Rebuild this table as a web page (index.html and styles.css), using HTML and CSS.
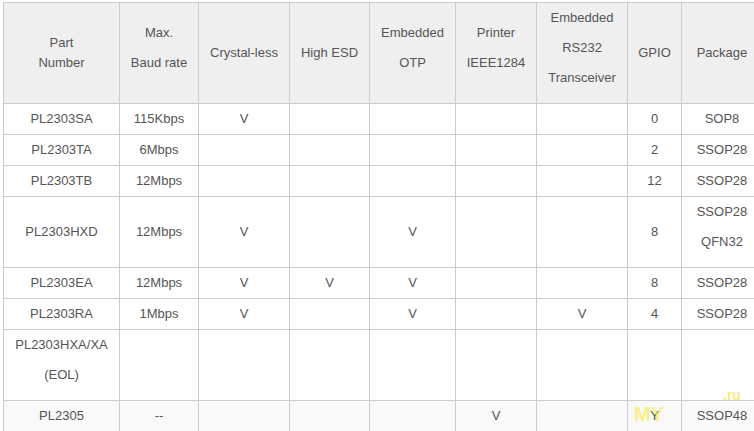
FILE: index.html
```html
<!DOCTYPE html>
<html>
<head>
<meta charset="utf-8">
<link rel="stylesheet" href="styles.css">
</head>
<body>
<div class="page">
<table class="spec">
  <colgroup>
    <col class="c1"><col class="c2"><col class="c3"><col class="c4"><col class="c5"><col class="c6"><col class="c7"><col class="c8"><col class="c9">
  </colgroup>
  <thead>
    <tr>
      <th>Part<br>Number</th>
      <th><p>Max.</p><p>Baud rate</p></th>
      <th>Crystal-less</th>
      <th>High ESD</th>
      <th><p>Embedded</p><p>OTP</p></th>
      <th><p>Printer</p><p>IEEE1284</p></th>
      <th><p>Embedded</p><p>RS232</p><p>Transceiver</p></th>
      <th>GPIO</th>
      <th>Package</th>
    </tr>
  </thead>
  <tbody>
    <tr><td>PL2303SA</td><td>115Kbps</td><td>V</td><td></td><td></td><td></td><td></td><td>0</td><td>SOP8</td></tr>
    <tr><td>PL2303TA</td><td>6Mbps</td><td></td><td></td><td></td><td></td><td></td><td>2</td><td>SSOP28</td></tr>
    <tr><td>PL2303TB</td><td>12Mbps</td><td></td><td></td><td></td><td></td><td></td><td>12</td><td>SSOP28</td></tr>
    <tr><td>PL2303HXD</td><td>12Mbps</td><td>V</td><td></td><td>V</td><td></td><td></td><td>8</td><td><p>SSOP28</p><p>QFN32</p></td></tr>
    <tr><td>PL2303EA</td><td>12Mbps</td><td>V</td><td>V</td><td>V</td><td></td><td></td><td>8</td><td>SSOP28</td></tr>
    <tr><td>PL2303RA</td><td>1Mbps</td><td>V</td><td></td><td>V</td><td></td><td>V</td><td>4</td><td>SSOP28</td></tr>
    <tr><td><p>PL2303HXA/XA</p><p>(EOL)</p></td><td></td><td></td><td></td><td></td><td></td><td></td><td></td><td></td></tr>
    <tr class="last"><td>PL2305</td><td>--</td><td></td><td></td><td></td><td>V</td><td></td><td>Y</td><td>SSOP48</td></tr>
  </tbody>
</table>
<div class="mark"><span class="my">MY</span><span class="ru">.ru</span></div>
</div>
</body>
</html>
```
FILE: styles.css
```css
html, body {
  margin: 0;
  padding: 0;
  background: #ffffff;
  overflow: hidden;
}
.page {
  position: relative;
  width: 754px;
  height: 431px;
  overflow: hidden;
  padding: 2px 0 0 3px;
  box-sizing: border-box;
}
.spec {
  border-collapse: collapse;
  table-layout: fixed;
  width: 759px;
  font-family: "Liberation Sans", Arial, sans-serif;
  font-size: 13px;
  line-height: 20px;
  color: #555555;
}
.c1 { width: 116px; }
.c2 { width: 79px; }
.c3 { width: 91px; }
.c4 { width: 80px; }
.c5 { width: 86px; }
.c6 { width: 81px; }
.c7 { width: 91px; }
.c8 { width: 54px; }
.c9 { width: 81px; }
.spec th, .spec td {
  border: 1px solid #cccccc;
  padding: 5px;
  text-align: center;
  vertical-align: middle;
  font-weight: normal;
}
.spec th {
  background: #efefef;
}
.spec p {
  margin: 0 0 10px 0;
}
.spec tr.last td {
  background: #f9f9f9;
}
.mark {
  position: absolute;
  left: 634px;
  top: 401px;
  font-family: "Liberation Sans", Arial, sans-serif;
  font-weight: bold;
  font-size: 20px;
  line-height: 26px;
  pointer-events: none;
}
.my {
  color: rgba(245, 236, 60, 0.6);
}
.ru {
  position: absolute;
  left: 89px;
  top: -14px;
  font-size: 14px;
  line-height: 16px;
  color: rgba(245, 225, 60, 0.7);
}
```
